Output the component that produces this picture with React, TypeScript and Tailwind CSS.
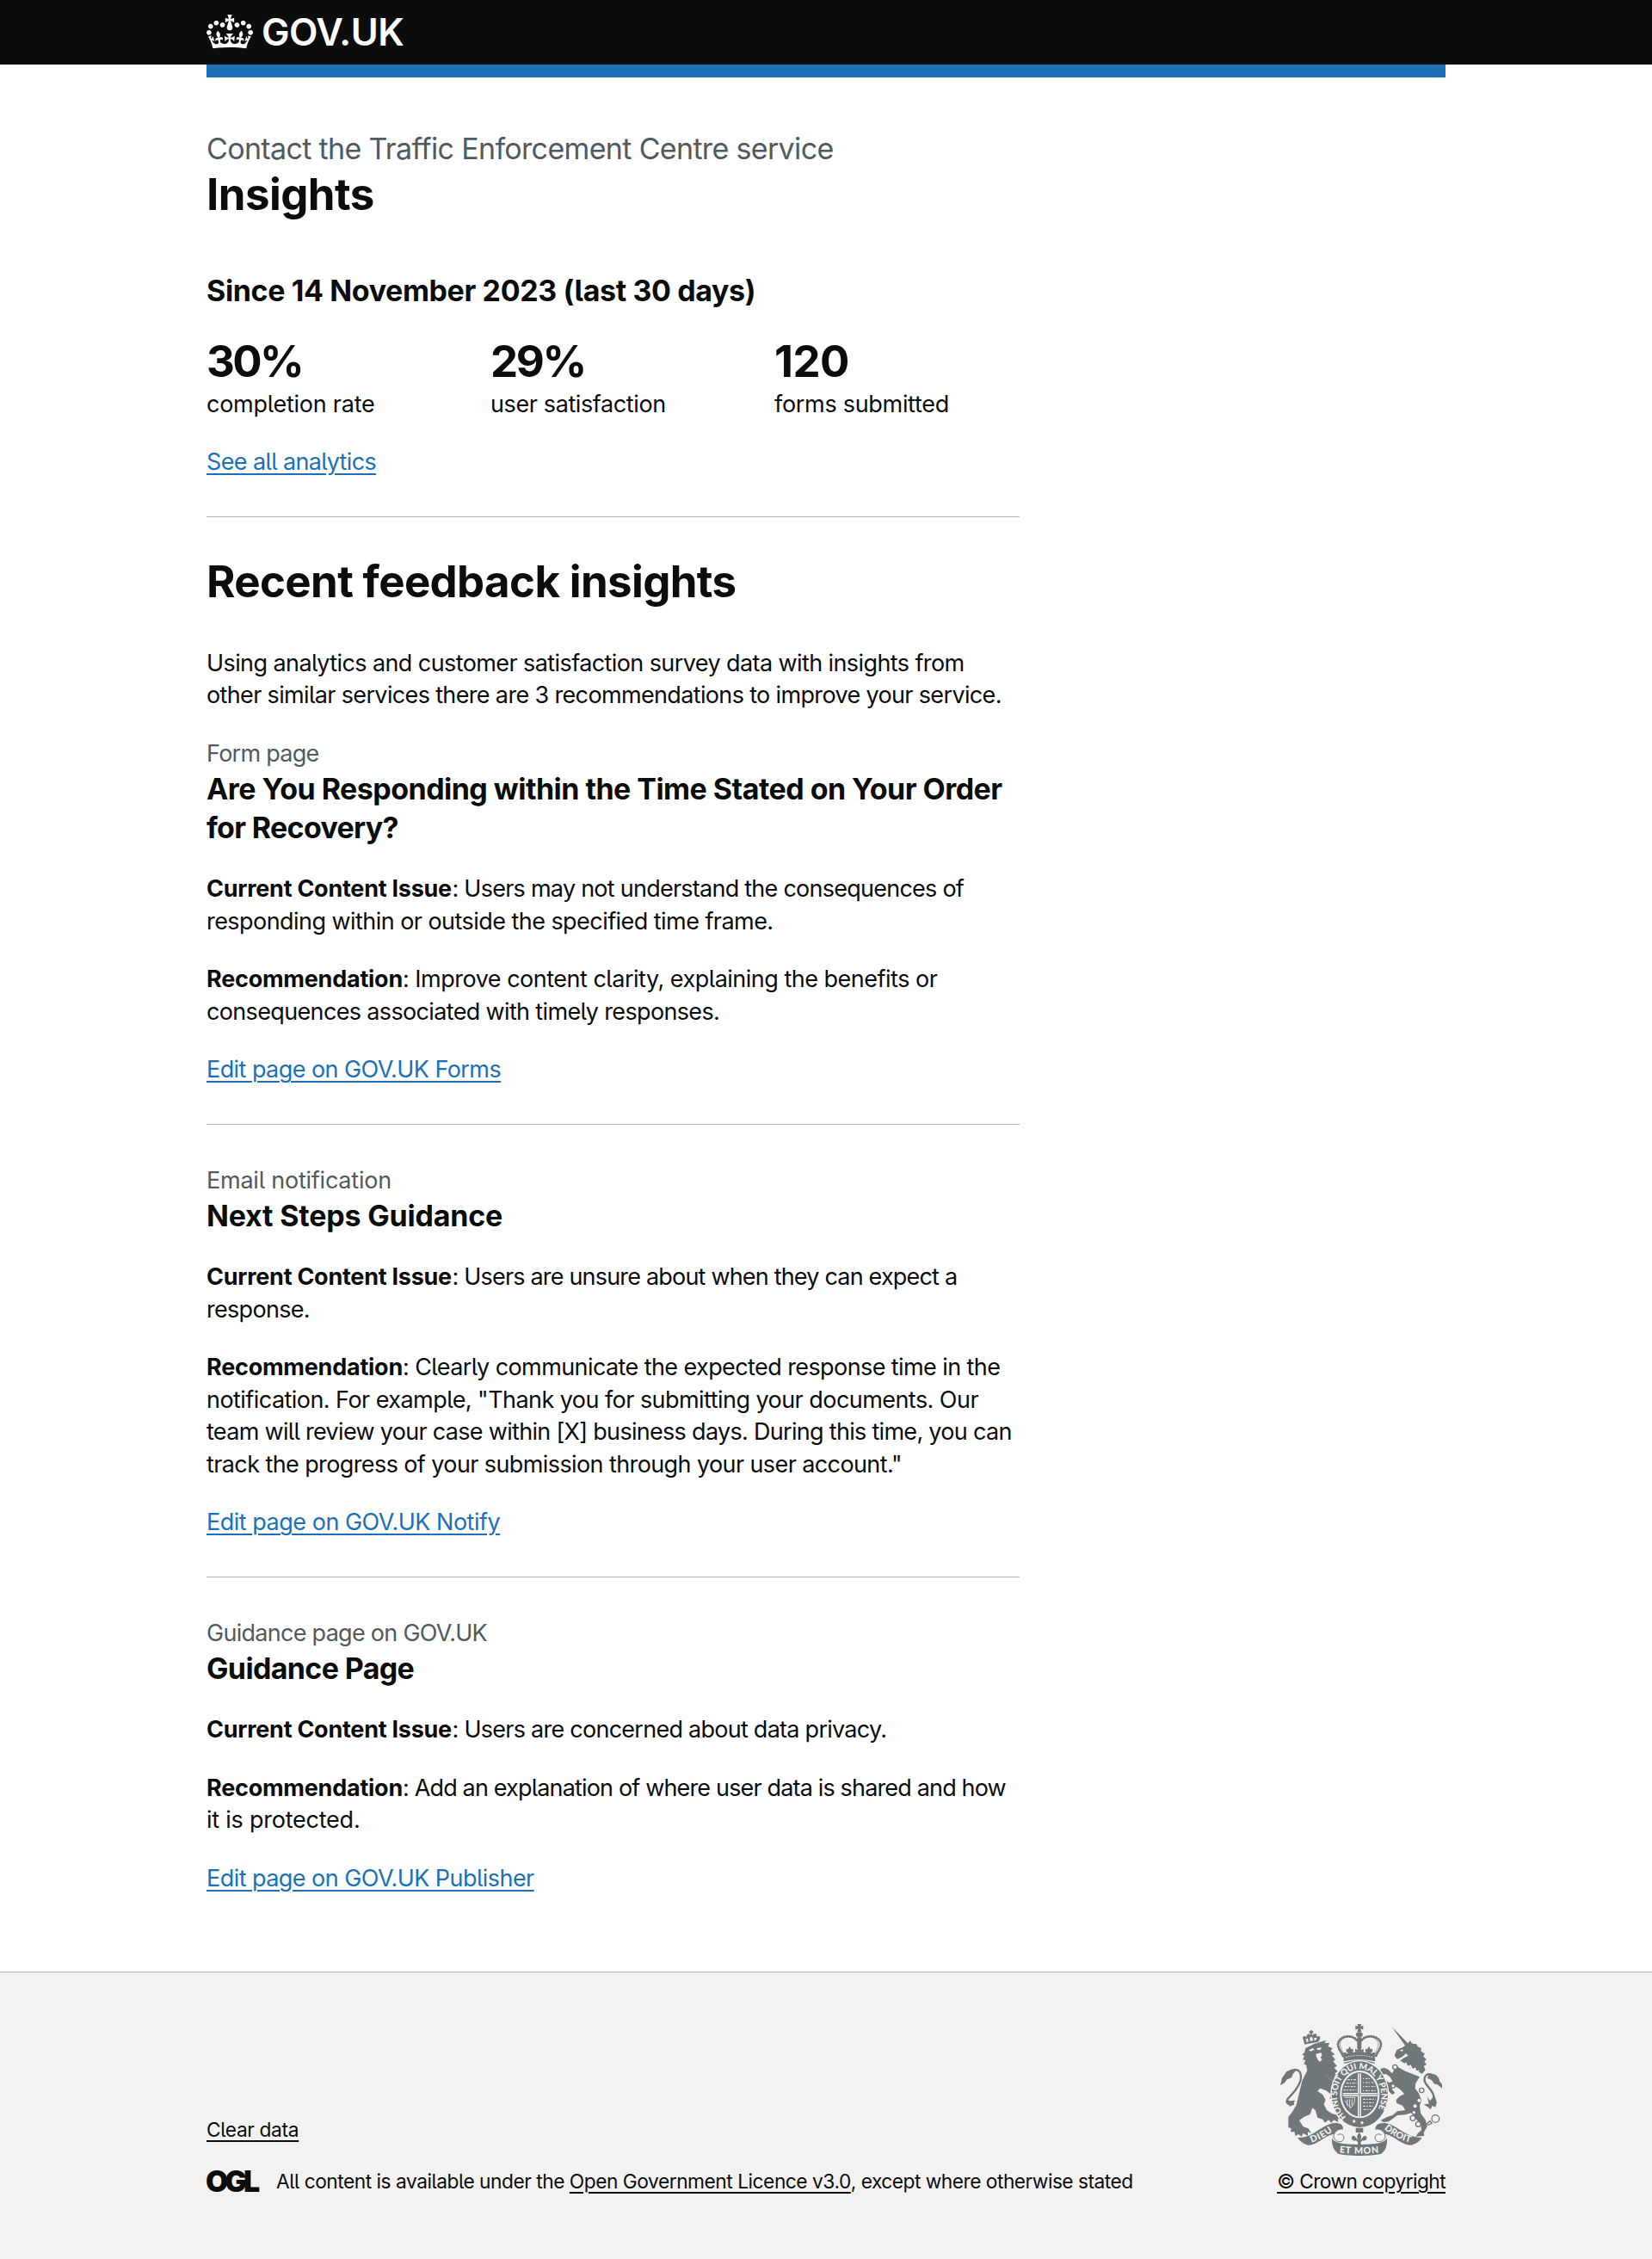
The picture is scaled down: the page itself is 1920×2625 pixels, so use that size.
import type { ReactNode } from "react";

function CrownLogo() {
  return (
    <svg className="h-[39.7px] w-[54px]" viewBox="0 0 132 97" fill="currentColor" fillRule="evenodd" aria-hidden="true">
      <path d="M25 30.2c3.5 1.5 7.7-.2 9.1-3.7 1.5-3.6-.2-7.8-3.9-9.2-3.6-1.4-7.6.3-9.1 3.9-1.4 3.5.3 7.5 3.9 9zM9 39.5c3.6 1.5 7.8-.2 9.2-3.7 1.5-3.6-.2-7.8-3.9-9.1-3.6-1.5-7.6.2-9.1 3.8-1.4 3.5.3 7.5 3.8 9zM4.4 57.2c3.5 1.5 7.7-.2 9.1-3.8 1.5-3.6-.2-7.7-3.9-9.1-3.5-1.5-7.6.3-9.1 3.8-1.4 3.5.3 7.6 3.9 9.1zm38.3-21.4c3.5 1.5 7.7-.2 9.1-3.8 1.5-3.6-.2-7.7-3.9-9.1-3.6-1.5-7.6.3-9.1 3.8-1.3 3.6.4 7.7 3.9 9.1zm64.4-5.6c-3.6 1.5-7.8-.2-9.1-3.7-1.5-3.6.2-7.8 3.8-9.2 3.6-1.4 7.7.3 9.2 3.9 1.3 3.5-.4 7.5-3.9 9zm15.9 9.3c-3.6 1.5-7.7-.2-9.1-3.7-1.5-3.6.2-7.8 3.7-9.1 3.6-1.5 7.7.2 9.2 3.8 1.5 3.5-.3 7.5-3.8 9zm4.7 17.7c-3.6 1.5-7.8-.2-9.2-3.8-1.5-3.6.2-7.7 3.9-9.1 3.6-1.5 7.7.3 9.2 3.8 1.3 3.5-.4 7.6-3.9 9.1zM89.3 35.8c-3.6 1.5-7.8-.2-9.2-3.8-1.4-3.6.2-7.7 3.9-9.1 3.6-1.5 7.7.3 9.2 3.8 1.4 3.6-.3 7.7-3.9 9.1zM69.7 17.7l8.9 4.7V9.3l-8.9 2.8c-.2-.3-.5-.6-.9-.9L72.4 0H59.6l3.5 11.2c-.3.3-.6.5-.9.9l-8.8-2.8v13.1l8.8-4.7c.3.3.6.7.9.9l-5 15.4v.1c-.2.8-.4 1.6-.4 2.4 0 4.1 3.1 7.5 7 8.1h.2c.3 0 .7.1 1 .1.4 0 .7 0 1-.1h.2c4-.6 7.1-4.1 7.1-8.1 0-.8-.1-1.7-.4-2.4V34l-5.1-15.4c.4-.2.7-.6 1-.9zM66 92.8c16.9 0 32.8 1.1 47.1 3.2 4-16.9 8.9-26.7 14-33.5l-9.6-3.4c1 4.9 1.1 7.2 0 10.2-1.5-1.4-3-4.3-4.2-8.7L108.6 76c2.8-2 5-3.2 7.5-3.3-4.4 9.4-10 11.9-13.6 11.2-4.3-.8-6.3-4.6-5.6-7.9 1-4.7 5.7-5.9 8-.5 4.3-8.7-3-11.4-7.6-8.8 7.1-7.2 7.9-13.5 2.1-21.1-8 6.1-8.1 12.3-4.5 20.8-4.7-5.4-12.1-2.5-9.5 6.2 3.4-5.2 7.9-2 7.2 3.1-.6 4.3-6.4 7.8-13.5 7.2-10.3-.9-10.9-8-11.2-13.8 2.5-.5 7.1 1.8 11 7.3L80.2 60c-4.1 4.4-8 5.3-12.3 5.4 1.4-4.4 8-11.6 8-11.6H55.5s6.4 7.2 7.9 11.6c-4.2-.1-8-1-12.3-5.4l1.4 16.4c3.9-5.5 8.5-7.7 10.9-7.3-.3 5.8-.9 12.8-11.1 13.8-7.2.6-12.9-2.9-13.5-7.2-.7-5 3.8-8.3 7.1-3.1 2.7-8.7-4.6-11.6-9.4-6.2 3.7-8.5 3.6-14.7-4.6-20.8-5.8 7.6-5 13.9 2.2 21.1-4.7-2.6-11.9.1-7.7 8.8 2.3-5.5 7.1-4.2 8.1.5.7 3.3-1.3 7.1-5.7 7.9-3.5.7-9-1.8-13.5-11.2 2.5.1 4.7 1.3 7.5 3.3l-4.7-15.4c-1.2 4.4-2.7 7.2-4.3 8.7-1.1-3-.9-5.3 0-10.2l-9.5 3.4c5 6.9 9.9 16.7 14 33.5 14.8-2.1 30.8-3.2 47.7-3.2z" />
    </svg>
  );
}

const INK = "#6f777b";
const PAPER = "#f3f2f1";

function RoyalArms() {
  return (
    <svg className="h-[153px] w-[188px] font-['Lato'] font-black" viewBox="84 66 564 459" fill="none" aria-hidden="true">
      <defs>
        <path id="garter" d="M314 390A77 92 0 1 1 404 390" />
        <path id="dieu" d="M193 479Q236 466 272 434" />
        <path id="droit" d="M446 432Q484 464 536 479" />
        <path id="mon" d="M290 514Q360 522 430 514" />
      </defs>

      {/* Lion: tail, crown, head and body */}
      <path d="M132 344C112 352 98 338 114 322C136 300 162 270 155 240C148 218 120 222 104 246" stroke={INK} strokeWidth="7" />
      <g fill={INK}>
        <path d="M84 280L90 254L106 232L122 224L140 226L128 240L124 252L106 260L100 270Z" />
        <path d="M106 330L118 334L136 332L128 346L118 354L114 346L104 342Z" />
        <path d="M172 150L200 136L244 122L238 132L256 132L250 144L266 150L260 160L274 172L264 176L276 190L268 196L282 212L272 218L284 232L274 238L292 252L284 272L270 290L276 300L290 306L286 322L294 336L280 332L288 350L272 338L276 348L262 340L264 328L256 326L262 312L244 298L222 290L214 300L232 312L242 330L236 346L246 366L264 378L284 384L294 398L284 396L286 408L270 400L262 410L252 400L240 410L232 398L214 392L206 366L196 358L188 380L166 390L150 402L164 424L182 430L192 446L180 442L180 456L164 446L158 458L148 450L136 456L134 442L120 442L122 430L112 426L112 390L126 372L140 348L150 306L160 264L178 228L174 208L166 206L172 192L162 190L168 178L160 172L168 166Z" />
        <path d="M169 137L164 120C158 110 168 104 176 112C174 100 186 96 190 106L189 98L185 98L185 91L189 91L189 88L195 88L195 91L199 91L198 98L194 98L196 106C204 94 214 100 210 110C222 104 226 114 220 122L216 128Z" />
      </g>
      <g fill={PAPER}>
        <path d="M183 157L198 150L202 156L190 161ZM212 150L228 148L224 156L212 156Z" />
        <path d="M208 170L226 166L230 174L224 182L230 190L222 198L214 190L210 180Z" />
        <path d="M173 118L180 116L182 128L176 130ZM187 112L196 112L198 124L188 126ZM202 114L212 114L208 122L202 124Z" />
      </g>
      <path d="M240 242L266 266" stroke={PAPER} strokeWidth="2" opacity=".35" />

      {/* Unicorn: horn, head, body and tail */}
      <path d="M604 340C640 316 600 292 588 268C582 244 600 234 616 246" stroke={INK} strokeWidth="7" />
      <g fill={INK}>
        <path d="M473 76L530 134L520 142Z" />
        <path d="M482 176L490 156L512 146L528 134L536 124L544 134L560 136L562 144L576 150L574 160L588 170L582 178L594 190L586 196L594 208L584 212L590 226L578 240L540 222L500 196L512 186L530 176L522 168L510 180L492 188Z" />
        <path d="M604 240C624 236 638 250 640 266L648 276L648 290L634 278L620 274L612 262L596 254Z" />
        <path d="M596 318L606 334L622 316L630 340L624 356L614 350L608 364L600 356L584 346L602 344Z" />
        <path d="M488 212L520 230L570 250L556 272L554 290L566 306L576 330L570 352L574 378L590 400L596 424L584 444L586 456L556 458L564 446L576 436L574 416L556 396L540 376L520 382L492 384L462 406L444 408L434 402L456 390L476 384L492 370L520 366L510 350L490 342L488 330L500 318L516 310L506 298L494 288L478 280L474 294L484 306L474 312L462 300L458 282L448 276L440 262L452 260L462 270L476 266L466 250L452 240L440 242L428 236L434 222L446 218L460 224L474 238Z" />
      </g>
      <g fill={PAPER}>
        <path d="M500 158L512 154L510 162Z" />
        <circle cx="568" cy="332" r="6" />
        <circle cx="554" cy="352" r="6" />
        <circle cx="550" cy="374" r="5" />
      </g>
      <path d="M502 196L578 242M508 198L514 208L522 202L528 218L538 210L544 226L554 220L558 234L568 228" stroke={PAPER} strokeWidth="4" />
      <g stroke={INK} strokeWidth="4" fill={PAPER}>
        <circle cx="484" cy="216" r="8" />
        <circle cx="477" cy="282" r="7" />
        <circle cx="577" cy="297" r="8" />
        <circle cx="546" cy="394" r="9" />
        <circle cx="565" cy="415" r="9" />
        <circle cx="625" cy="396" r="13" />
        <path d="M594 414L606 404L612 412L600 418Z" />
      </g>

      {/* Imperial crown */}
      <g stroke={INK} strokeWidth="9" strokeDasharray="1 8" strokeLinecap="round">
        <path d="M350 122C336 104 302 104 288 126C278 144 296 160 304 180" />
        <path d="M368 122C382 104 418 104 432 126C442 144 424 160 416 180" />
      </g>
      <path d="M346 116C330 104 304 108 294 128C288 144 302 160 308 178M372 116C388 104 414 108 424 128C430 144 416 160 410 178" stroke={INK} strokeWidth="2" />
      <g fill={INK}>
        <path d="M352 66H367L364 74L373 71V86L364 82L367 94H352L355 82L346 86V71L355 74Z" />
        <ellipse cx="359.500" cy="103" rx="12" ry="9" />
        <path d="M352 112H367V150L359 160L352 150Z" />
        <path d="M304 196L306 172Q360 154 413 172L415 196Q360 184 304 196Z" />
        <path d="M326 144L332 154L338 152V162L331 168H321L314 162V152L320 154ZM393 144L399 154L405 152V162L398 168H388L381 162V152L387 154ZM359 146L366 156L374 152V164H345V152L353 156Z" />
        <path d="M300 170C308 160 316 166 318 172M418 170C410 160 402 166 400 172" />
      </g>
      <path d="M312 182Q360 168 407 182" stroke={PAPER} strokeWidth="3" strokeDasharray="5 4" />
      <path d="M306 202Q360 188 413 202" stroke={INK} strokeWidth="4" />

      {/* Garter and shield */}
      <ellipse cx="361" cy="311" rx="102" ry="119" fill={PAPER} />
      <ellipse cx="361" cy="311" rx="98" ry="115" fill={INK} />
      <ellipse cx="361" cy="311" rx="69" ry="83" fill={PAPER} />
      <ellipse cx="361" cy="311" rx="63" ry="77" fill={INK} />
      <g stroke={PAPER} strokeWidth="3">
        <path d="M314 272H350M308 284H350M304 296H350M318 260H350" strokeDasharray="9 3 5 4" />
        <path d="M372 256H402M372 270H412M372 284H416M372 298H418" strokeDasharray="4 5 8 3" />
        <path d="M372 328H416M372 340H414M372 352H408M374 364H400" strokeDasharray="9 3 5 4" />
        <path d="M308 322H344C344 340 338 352 326 360M318 328V352M326 328V356M334 328V350M310 332C316 346 322 352 330 356" strokeWidth="2.500" />
      </g>
      <path d="M360 238V390M302 312H422" stroke={PAPER} strokeWidth="12" />
      <path d="M360 238V390M302 312H422" stroke={INK} strokeWidth="5" opacity=".6" />
      <text fill={PAPER} fontSize="30">
        <textPath href="#garter" textLength="396" lengthAdjust="spacing">HONI SOIT QUI MAL Y PENSE</textPath>
      </text>
      <g fill={PAPER}>
        <circle cx="341" cy="405" r="5" />
        <circle cx="369" cy="410" r="5" />
      </g>

      {/* Motto ribbon with fleur-de-lis */}
      <g fill={INK}>
        <path d="M144 462C200 462 226 420 266 412C292 408 306 418 302 434C290 432 284 440 282 448C240 450 214 490 180 488C164 484 152 474 144 462Z" />
        <path d="M578 462C520 462 494 420 454 412C428 408 414 418 416 434C430 432 436 440 438 448C480 450 506 490 540 488C558 484 570 474 578 462Z" />
        <path d="M264 464C276 482 300 484 360 486C420 484 444 482 456 464C458 490 450 508 436 518C400 527 320 527 286 518C272 508 262 490 264 464Z" />
        <path d="M347 428H373V444H347ZM359 444C370 456 366 464 363 470C372 464 376 450 384 458C390 468 378 474 370 472L364 478L366 488H353L355 478L349 472C340 474 328 468 334 458C342 450 346 464 356 470C352 464 348 456 359 444Z" />
      </g>
      <g stroke={INK} strokeWidth="3" fill={PAPER}>
        <path d="M302 432C282 430 268 446 270 462C280 482 306 480 306 462C306 452 296 446 284 452" />
        <path d="M418 432C438 430 452 446 450 462C440 482 414 480 414 462C414 452 424 446 436 452" />
      </g>
      <g fill={PAPER} fontSize="32">
        <text><textPath href="#dieu" textLength="84" lengthAdjust="spacing">DIEU</textPath></text>
        <text><textPath href="#droit" textLength="102" lengthAdjust="spacing">DROIT</textPath></text>
        <text><textPath href="#mon" textLength="138" lengthAdjust="spacing">ET MON</textPath></text>
      </g>
    </svg>
  );
}

function Line({ className = "", children }: { className?: string; children: ReactNode }) {
  return <span className={`block whitespace-nowrap ${className}`}>{children}</span>;
}

function Body({ children }: { children: ReactNode }) {
  return <p className="mb-[29.5px] pt-[0.5px] text-[27px] leading-[37.5px]">{children}</p>;
}

function Caption({ children }: { children: ReactNode }) {
  return (
    <span className="-mb-[0.5px] block pt-[0.5px] text-[27px] leading-[37.5px] font-normal text-[#505a5f]">{children}</span>
  );
}

function HeadingM({ children }: { children: ReactNode }) {
  return <h3 className="mb-[30px] text-[34px] leading-[45px] font-bold">{children}</h3>;
}

function Issue() {
  return <strong className="inline-block w-[285.5px] font-bold tracking-[-0.26px]">Current Content Issue</strong>;
}

function Recommendation() {
  return <strong className="inline-block w-[228px] font-bold tracking-[-0.24px]">Recommendation</strong>;
}

function Action({ className, children }: { className: string; children: ReactNode }) {
  return (
    <p className="-mb-[0.5px] pt-[0.5px] text-[27px] leading-[37.5px]">
      <a href="#" className={`text-[#1d70b8] underline decoration-2 underline-offset-[4px] ${className}`}>
        {children}
      </a>
    </p>
  );
}

function FooterLink({ className, children }: { className: string; children: ReactNode }) {
  return (
    <a href="#" className={`underline decoration-2 underline-offset-[4px] ${className}`}>
      {children}
    </a>
  );
}

function Rule() {
  return <hr className="my-[45px] h-0 border-0 border-t border-[#b1b4b6]" />;
}

function Stat({ value, label }: { value: ReactNode; label: ReactNode }) {
  return (
    <div className="w-[330px] shrink-0">
      <div className="text-[51px] leading-[60px] font-bold whitespace-nowrap">{value}</div>
      <div className="-mb-[0.5px] pt-[0.5px] text-[27px] leading-[37.5px] whitespace-nowrap">{label}</div>
    </div>
  );
}

export default function App() {
  return (
    <div className="flex min-h-[2625px] flex-col bg-white font-['Inter',sans-serif] text-[#0b0c0c] [font-feature-settings:'cv05']">
      <header className="h-[75px] bg-[#0b0c0c] text-white">
        <div className="mx-auto flex h-[75px] w-[1440px] items-start">
          <span className="mt-[17px]">
            <CrownLogo />
          </span>
          <span className="ml-[10px] text-[43.5px] leading-[74px] font-semibold tracking-[-0.5px]">GOV.UK</span>
        </div>
      </header>
      <div className="mx-auto h-[15px] w-[1440px] bg-[#1d70b8]" />

      <main className="mx-auto w-[1440px] grow pt-[60px]">
        <div className="w-[945px]">
          <span className="block text-[34px] leading-[45px] tracking-[-0.66px] text-[#505a5f]">
            Contact the Traffic Enforcement Centre service
          </span>
          <h1 className="mb-[59.5px] pt-[0.5px] text-[51px] leading-[60px] font-bold tracking-[-0.58px]">Insights</h1>

          <h2 className="mb-[30px] text-[34px] leading-[45px] font-bold tracking-[-0.38px]">
            Since 14 November 2023 (last 30 days)
          </h2>
          <div className="mb-[30px] flex">
            <Stat
              value={<span className="tracking-[-2.7px]">30%</span>}
              label={<span className="tracking-[-0.26px]">completion rate</span>}
            />
            <Stat
              value={<span className="tracking-[-2.4px]">29%</span>}
              label={<span className="tracking-[-0.39px]">user satisfaction</span>}
            />
            <Stat
              value={<span className="tracking-[-0.56px]">120</span>}
              label={<span className="tracking-[-0.3px]">forms submitted</span>}
            />
          </div>
          <Action className="tracking-[-0.63px]">See all analytics</Action>
          <Rule />

          <h2 className="mb-[45px] text-[51px] leading-[60px] font-bold tracking-[-0.65px]">Recent feedback insights</h2>
          <Body>
            <Line className="tracking-[-0.59px]">Using analytics and customer satisfaction survey data with insights from</Line>
            <Line className="tracking-[-0.65px]">other similar services there are 3 recommendations to improve your service.</Line>
          </Body>

          <section>
            <Caption>
              <Line className="tracking-[-0.73px]">Form page</Line>
            </Caption>
            <HeadingM>
              <Line className="tracking-[-0.53px]">Are You Responding within the Time Stated on Your Order</Line>
              <Line className="tracking-[-0.69px]">for Recovery?</Line>
            </HeadingM>
            <Body>
              <Line className="tracking-[-0.75px]"><Issue />: Users may not understand the consequences of</Line>
              <Line className="tracking-[-0.55px]">responding within or outside the specified time frame.</Line>
            </Body>
            <Body>
              <Line className="tracking-[-0.5px]"><Recommendation />: Improve content clarity, explaining the benefits or</Line>
              <Line className="tracking-[-0.65px]">consequences associated with timely responses.</Line>
            </Body>
            <Action className="tracking-[-0.57px]">Edit page on GOV.UK Forms</Action>
          </section>
          <Rule />

          <section>
            <Caption>
              <Line className="tracking-[-0.23px]">Email notification</Line>
            </Caption>
            <HeadingM>
              <Line className="tracking-[-0.2px]">Next Steps Guidance</Line>
            </HeadingM>
            <Body>
              <Line className="tracking-[-0.81px]"><Issue />: Users are unsure about when they can expect a</Line>
              <Line className="tracking-[-0.7px]">response.</Line>
            </Body>
            <Body>
              <Line className="tracking-[-0.59px]"><Recommendation />: Clearly communicate the expected response time in the</Line>
              <Line className="tracking-[-0.55px]">notification. For example, "Thank you for submitting your documents. Our</Line>
              <Line className="tracking-[-0.7px]">team will review your case within [X] business days. During this time, you can</Line>
              <Line className="tracking-[-0.6px]">track the progress of your submission through your user account."</Line>
            </Body>
            <Action className="tracking-[-0.49px]">Edit page on GOV.UK Notify</Action>
          </section>
          <Rule />

          <section>
            <Caption>
              <Line className="tracking-[-0.72px]">Guidance page on GOV.UK</Line>
            </Caption>
            <HeadingM>
              <Line className="tracking-[-0.65px]">Guidance Page</Line>
            </HeadingM>
            <Body>
              <Line className="tracking-[-0.74px]"><Issue />: Users are concerned about data privacy.</Line>
            </Body>
            <Body>
              <Line className="tracking-[-0.84px]"><Recommendation />: Add an explanation of where user data is shared and how</Line>
              <Line className="tracking-[-0.23px]">it is protected.</Line>
            </Body>
            <Action className="tracking-[-0.55px]">Edit page on GOV.UK Publisher</Action>
          </section>
        </div>
      </main>

      <footer className="h-[334px] border-t border-[#b1b4b6] bg-[#f3f2f1] text-[22.75px] leading-[30px]">
        <div className="mx-auto flex h-[258px] w-[1440px] items-end justify-between">
          <div>
            <p className="mb-[30px] whitespace-nowrap">
              <FooterLink className="tracking-[-0.37px]">Clear data</FooterLink>
            </p>
            <div className="flex items-center">
              <span className="-ml-px w-[82px] text-[34px] leading-[30px] font-black tracking-[-4px]">OGL</span>
              <span className="whitespace-pre">
                <span className="tracking-[-0.49px]">All content is available under the </span>
                <FooterLink className="tracking-[-0.48px]">Open Government Licence v3.0</FooterLink>
                <span className="tracking-[-0.52px]">, except where otherwise stated</span>
              </span>
            </div>
          </div>
          <div className="flex flex-col items-end">
            <span className="mr-[4px] mb-[15px]">
              <RoyalArms />
            </span>
            <FooterLink className="tracking-[-0.59px] whitespace-nowrap">© Crown copyright</FooterLink>
          </div>
        </div>
      </footer>
    </div>
  );
}
